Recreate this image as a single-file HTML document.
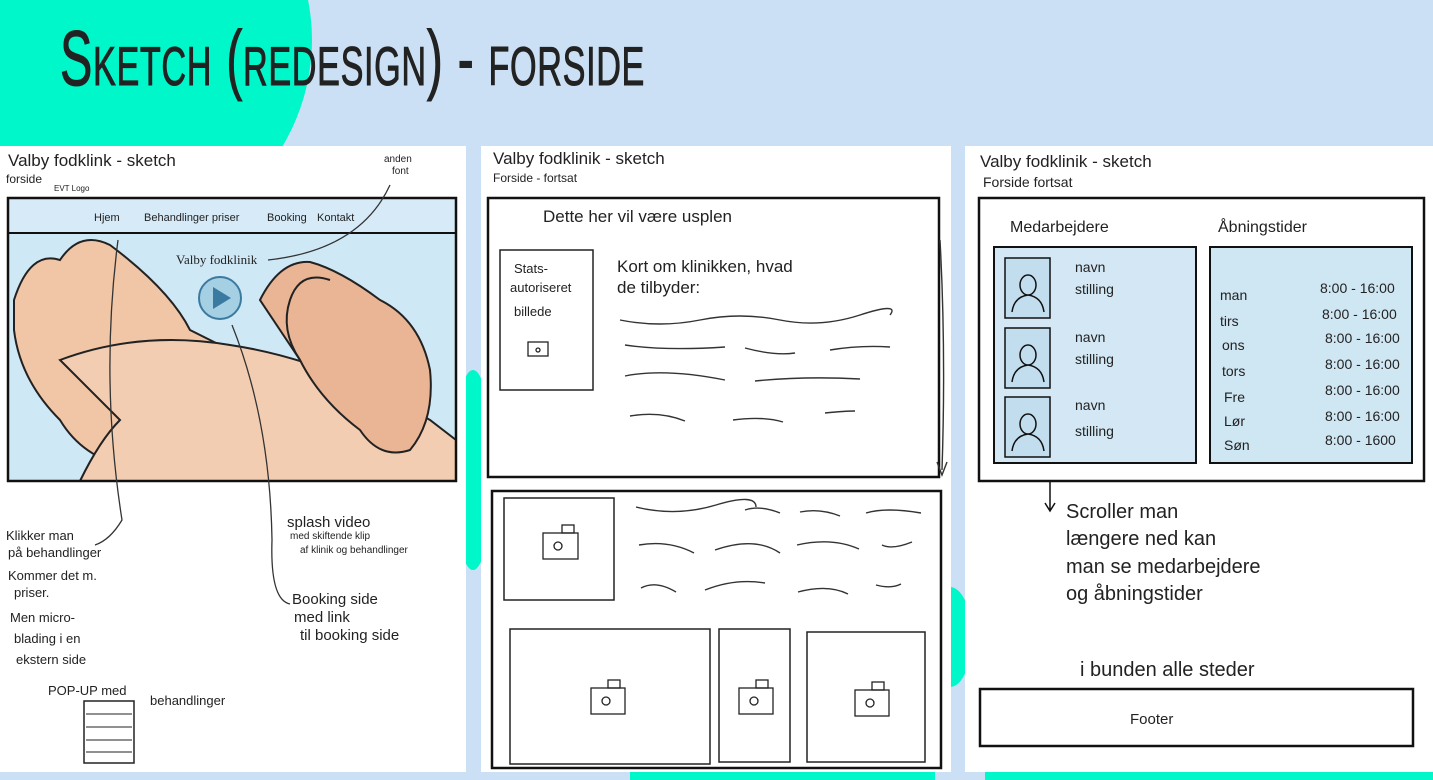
<!DOCTYPE html>
<html><head><meta charset="utf-8"><style>
html,body{margin:0;padding:0;width:1433px;height:780px;overflow:hidden;background:#cbe0f4}
svg{display:block}
text{font-family:"Liberation Sans Narrow","Liberation Sans",sans-serif;fill:#222}
</style></head><body>
<svg width="1433" height="780" viewBox="0 0 1433 780">
<rect width="1433" height="780" fill="#cbe0f4"/>
<ellipse cx="40" cy="40" rx="272" ry="235" fill="#00f7c9"/>
<ellipse cx="473" cy="470" rx="20" ry="100" fill="#00f7c9"/>
<ellipse cx="950" cy="637" rx="22" ry="50" fill="#00f7c9"/>
<rect x="630" y="772" width="305" height="8" fill="#00f7c9"/>
<rect x="985" y="772" width="448" height="8" fill="#00f7c9"/>
<text x="60" y="85" font-size="78" style="font-variant:small-caps;letter-spacing:1px" textLength="585" lengthAdjust="spacingAndGlyphs" stroke="#222" stroke-width="1">Sketch (redesign) - forside</text>

<rect x="0" y="146" width="466" height="626" fill="#fff"/>
<rect x="481" y="146" width="470" height="626" fill="#fff"/>
<rect x="965" y="146" width="468" height="626" fill="#fff"/>

<!-- PANEL 1 -->
<text x="8" y="166" font-size="17">Valby fodklink - sketch</text>
<text x="6" y="183" font-size="12">forside</text>
<text x="54" y="191" font-size="8">EVT Logo</text>
<text x="384" y="162" font-size="10" fill="#555">anden</text>
<text x="392" y="174" font-size="10" fill="#555">font</text>
<rect x="8" y="198" width="448" height="283" fill="#d6ebf7"/>
<rect x="8" y="233" width="448" height="248" fill="#cfe8f6"/>
<path d="M14 300 Q30 250 60 260 Q80 230 110 245 Q170 290 190 330 L330 400 Q310 430 280 440 L160 470 Q90 470 60 420 Q20 380 14 330 Z" fill="#f0c6a6" stroke="#222" stroke-width="2"/>
<path d="M60 360 Q140 330 230 345 Q330 360 430 420 L456 440 L456 481 L80 481 Q100 440 120 420 Z" fill="#f3cdb2" stroke="#222" stroke-width="2"/>
<path d="M260 300 Q280 260 310 262 Q340 270 380 300 Q420 320 430 370 Q435 420 410 450 Q380 460 360 430 Q320 400 300 360 Z" fill="#e9b595" stroke="#222" stroke-width="2"/>
<path d="M300 360 Q280 330 290 300 Q300 270 330 280" fill="none" stroke="#222" stroke-width="2"/>
<rect x="8" y="198" width="448" height="283" fill="none" stroke="#111" stroke-width="2.5"/>
<line x1="8" y1="233" x2="456" y2="233" stroke="#111" stroke-width="2"/>
<text x="94" y="221" font-size="11">Hjem</text>
<text x="144" y="221" font-size="11">Behandlinger priser</text>
<text x="267" y="221" font-size="11">Booking</text>
<text x="317" y="221" font-size="11">Kontakt</text>
<text x="176" y="264" font-size="13" style="font-family:'Liberation Serif',serif" fill="#333">Valby fodklinik</text>
<circle cx="220" cy="298" r="21" fill="#a5cfe3" stroke="#3b7aa0" stroke-width="2"/>
<path d="M213 287 L213 309 L231 298 Z" fill="#3b7aa0"/>
<path d="M118 240 Q100 380 122 520 Q110 540 95 545" fill="none" stroke="#333" stroke-width="1.3"/>
<path d="M232 325 Q270 420 272 540 Q270 600 290 604" fill="none" stroke="#333" stroke-width="1.3"/>
<path d="M268 260 Q360 250 390 185" fill="none" stroke="#333" stroke-width="1.3"/>
<text x="6" y="540" font-size="13">Klikker man</text>
<text x="8" y="557" font-size="13">på behandlinger</text>
<text x="8" y="580" font-size="13">Kommer det m.</text>
<text x="14" y="597" font-size="13">priser.</text>
<text x="10" y="622" font-size="13">Men micro-</text>
<text x="14" y="643" font-size="13">blading i en</text>
<text x="16" y="664" font-size="13">ekstern side</text>
<text x="48" y="695" font-size="13">POP-UP med</text>
<text x="150" y="705" font-size="13">behandlinger</text>
<rect x="84" y="701" width="50" height="62" fill="none" stroke="#222" stroke-width="1.5"/>
<g stroke="#222" stroke-width="1"><line x1="86" y1="714" x2="132" y2="714"/><line x1="86" y1="727" x2="132" y2="727"/><line x1="86" y1="740" x2="132" y2="740"/><line x1="86" y1="752" x2="132" y2="752"/></g>
<text x="287" y="527" font-size="15">splash video</text>
<text x="290" y="539" font-size="10">med skiftende klip</text>
<text x="300" y="553" font-size="10">af klinik og behandlinger</text>
<text x="292" y="604" font-size="15">Booking side</text>
<text x="294" y="622" font-size="15">med link</text>
<text x="300" y="640" font-size="15">til booking side</text>

<!-- PANEL 2 -->
<text x="493" y="164" font-size="17">Valby fodklinik - sketch</text>
<text x="493" y="182" font-size="12">Forside - fortsat</text>
<rect x="488" y="198" width="451" height="279" fill="none" stroke="#111" stroke-width="2.5"/>
<text x="543" y="222" font-size="17" fill="#333">Dette her vil være usplen</text>
<rect x="500" y="250" width="93" height="140" fill="none" stroke="#222" stroke-width="1.5"/>
<text x="514" y="273" font-size="13">Stats-</text>
<text x="510" y="292" font-size="13">autoriseret</text>
<text x="514" y="316" font-size="13">billede</text>
<text x="617" y="272" font-size="17">Kort om klinikken, hvad</text>
<text x="617" y="293" font-size="17">de tilbyder:</text>
<g fill="none" stroke="#333" stroke-width="1.4">
<path d="M620 320 q40 8 80 0 t80 0 t80 -5 t30 0"/>
<path d="M625 345 q40 6 100 2 M745 348 q30 8 50 5 M830 350 q30 -5 60 -3"/>
<path d="M625 376 q40 -8 100 4 M755 381 q50 -5 105 -2"/>
<path d="M630 416 q30 -5 55 5 M733 420 q30 -4 50 2 M825 413 q20 -2 30 -2"/>
<path d="M636 507 q40 10 80 -2 t40 2 M745 510 q15 -5 35 3 M800 512 q20 -4 40 4 M866 513 q20 -6 55 0"/>
<path d="M639 545 q30 -5 55 8 M715 550 q40 -14 65 3 M797 545 q35 -8 62 4 M882 545 q10 5 30 -3"/>
<path d="M641 588 q15 -8 35 4 M705 590 q30 -12 60 -7 M798 592 q30 -8 50 2 M876 585 q15 4 25 -1"/>
<path d="M940 240 Q946 350 942 470 M937 462 L942 475 L947 462"/>
</g>
<rect x="492" y="491" width="449" height="277" fill="none" stroke="#111" stroke-width="2.5"/>
<rect x="504" y="498" width="110" height="102" fill="none" stroke="#222" stroke-width="1.5"/>
<rect x="510" y="629" width="200" height="135" fill="none" stroke="#222" stroke-width="1.5"/>
<rect x="719" y="629" width="71" height="133" fill="none" stroke="#222" stroke-width="1.5"/>
<rect x="807" y="632" width="118" height="130" fill="none" stroke="#222" stroke-width="1.5"/>
<g fill="none" stroke="#222" stroke-width="1.3">
<rect x="528" y="342" width="20" height="14"/><circle cx="538" cy="350" r="2"/>
<rect x="543" y="533" width="35" height="26"/><rect x="562" y="525" width="12" height="8"/><circle cx="558" cy="546" r="4"/>
<rect x="591" y="688" width="34" height="26"/><rect x="608" y="680" width="12" height="8"/><circle cx="606" cy="701" r="4"/>
<rect x="739" y="688" width="34" height="26"/><rect x="756" y="680" width="12" height="8"/><circle cx="754" cy="701" r="4"/>
<rect x="855" y="690" width="34" height="26"/><rect x="872" y="682" width="12" height="8"/><circle cx="870" cy="703" r="4"/>
</g>

<!-- PANEL 3 -->
<text x="980" y="167" font-size="17">Valby fodklinik - sketch</text>
<text x="983" y="187" font-size="14">Forside fortsat</text>
<rect x="979" y="198" width="445" height="283" fill="none" stroke="#111" stroke-width="2.5"/>
<text x="1010" y="232" font-size="16">Medarbejdere</text>
<text x="1218" y="232" font-size="16">Åbningstider</text>
<rect x="994" y="247" width="202" height="216" fill="#d3e8f4" stroke="#111" stroke-width="2"/>
<rect x="1210" y="247" width="202" height="216" fill="#cfe6f3" stroke="#111" stroke-width="2"/>
<g fill="#c2deee" stroke="#111" stroke-width="1.5">
<rect x="1005" y="258" width="45" height="60"/><rect x="1005" y="328" width="45" height="60"/><rect x="1005" y="397" width="45" height="60"/>
</g>
<g fill="none" stroke="#111" stroke-width="1.5">
<path d="M1012 312 q2 -15 16 -17 q14 2 16 17 M1020 285 a8 10 0 1 0 16 0 a8 10 0 1 0 -16 0"/>
<path d="M1012 382 q2 -15 16 -17 q14 2 16 17 M1020 355 a8 10 0 1 0 16 0 a8 10 0 1 0 -16 0"/>
<path d="M1012 451 q2 -15 16 -17 q14 2 16 17 M1020 424 a8 10 0 1 0 16 0 a8 10 0 1 0 -16 0"/>
<path d="M1050 482 L1050 510 M1045 503 L1050 511 L1055 503"/>
</g>
<g font-size="14">
<text x="1075" y="272">navn</text><text x="1075" y="294">stilling</text>
<text x="1075" y="342">navn</text><text x="1075" y="364">stilling</text>
<text x="1075" y="410">navn</text><text x="1075" y="436">stilling</text>
<text x="1220" y="300">man</text><text x="1220" y="326">tirs</text><text x="1222" y="350">ons</text><text x="1222" y="376">tors</text><text x="1224" y="402">Fre</text><text x="1224" y="426">Lør</text><text x="1224" y="450">Søn</text>
<text x="1320" y="293">8:00 - 16:00</text><text x="1322" y="319">8:00 - 16:00</text><text x="1325" y="343">8:00 - 16:00</text><text x="1325" y="369">8:00 - 16:00</text><text x="1325" y="395">8:00 - 16:00</text><text x="1325" y="421">8:00 - 16:00</text><text x="1325" y="445">8:00 - 1600</text>
</g>
<g font-size="20">
<text x="1066" y="518">Scroller man</text>
<text x="1066" y="545">længere ned kan</text>
<text x="1066" y="573">man se medarbejdere</text>
<text x="1066" y="600">og åbningstider</text>
<text x="1080" y="676">i bunden alle steder</text>
</g>
<rect x="980" y="689" width="433" height="57" fill="none" stroke="#111" stroke-width="2.5"/>
<text x="1130" y="724" font-size="15">Footer</text>
</svg>
</body></html>
